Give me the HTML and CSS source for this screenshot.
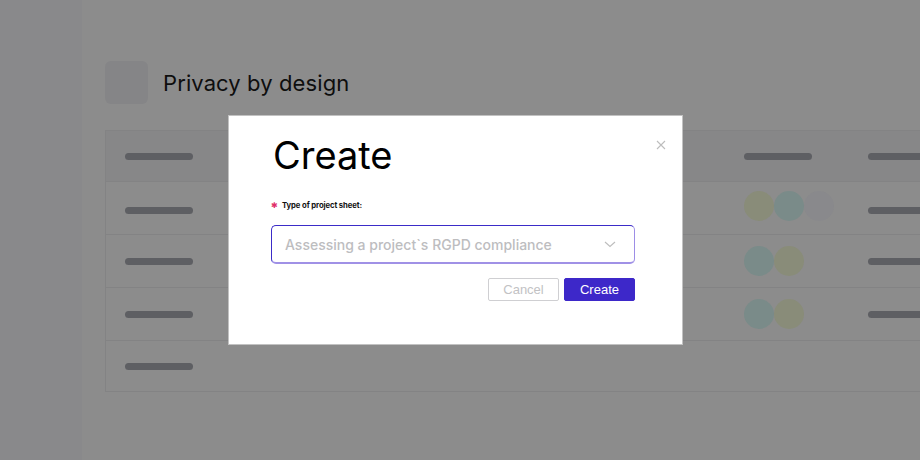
FILE: index.html
```html
<!DOCTYPE html>
<html lang="en">
<head>
<meta charset="utf-8">
<title>Privacy by design</title>
<link rel="stylesheet" href="styles.css">
</head>
<body>
<div class="app">
  <aside class="sidebar"></aside>
  <main class="main">
    <div class="page-head">
      <div class="page-icon"></div>
      <h1 class="page-title">Privacy by design</h1>
    </div>
    <div class="table">
      <div class="row head">
        <div class="cell"><span class="bar"></span></div>
        <div class="cell"><span class="bar"></span></div>
        <div class="cell"><span class="bar"></span></div>
      </div>
      <div class="row first">
        <div class="cell"><span class="bar"></span></div>
        <div class="cell avatars"><span class="dot yellow"></span><span class="dot teal"></span><span class="dot grey"></span></div>
        <div class="cell"><span class="bar"></span></div>
      </div>
      <div class="row">
        <div class="cell"><span class="bar"></span></div>
        <div class="cell avatars"><span class="dot teal"></span><span class="dot yellow"></span></div>
        <div class="cell"><span class="bar"></span></div>
      </div>
      <div class="row">
        <div class="cell"><span class="bar"></span></div>
        <div class="cell avatars"><span class="dot teal"></span><span class="dot yellow"></span></div>
        <div class="cell"><span class="bar"></span></div>
      </div>
      <div class="row last">
        <div class="cell"><span class="bar"></span></div>
        <div class="cell"></div>
        <div class="cell"></div>
      </div>
    </div>
  </main>
</div>

<div class="modal" role="dialog">
  <button class="close" aria-label="Close">
    <svg width="10" height="10" viewBox="0 0 10 10"><path d="M1 1L9 9M9 1L1 9" stroke="#bdbdbd" stroke-width="1.1" fill="none"/></svg>
  </button>
  <h2 class="modal-title">Create</h2>
  <div class="field-label"><span class="req">✱</span>Type of project sheet:</div>
  <div class="select">
    <span class="placeholder">Assessing a project`s RGPD compliance</span>
    <svg class="chev" width="12" height="7" viewBox="0 0 12 7"><path d="M1 1L6 5.5L11 1" stroke="#bdbdbd" stroke-width="1.1" fill="none"/></svg>
  </div>
  <div class="actions">
    <button class="btn cancel">Cancel</button>
    <button class="btn primary">Create</button>
  </div>
</div>
</body>
</html>
```

FILE: styles.css
```css
* { box-sizing: border-box; }
html, body { margin: 0; padding: 0; }
body {
  width: 920px;
  height: 460px;
  overflow: hidden;
  background: #8c8c8c;
  font-family: Inter, "Liberation Sans", sans-serif;
  position: relative;
}
.app {
  display: flex;
  height: 460px;
  overflow: hidden;
}
.sidebar {
  width: 82px;
  flex: none;
  background: #89898b;
}
.main {
  flex: 1;
  padding: 61px 0 0 23px;
  min-width: 0;
  overflow: hidden;
}
.page-head {
  display: flex;
  align-items: center;
  gap: 15px;
  height: 43px;
}
.page-icon {
  width: 43px;
  height: 43px;
  border-radius: 6px;
  background: #858587;
}
.page-title {
  margin: 0;
  font-size: 22px;
  font-weight: 400;
  color: #0e0e0e;
  letter-spacing: 0.1px;
}
.table {
  margin-top: 26px;
  width: 900px;
  border-left: 1px solid #838384;
  border-top: 1px solid #838384;
}
.row {
  display: grid;
  grid-template-columns: 619px 124px 1fr;
  padding-left: 19px;
  height: 53px;
  border-bottom: 1px solid #838384;
  align-items: center;
}
.row.head {
  height: 51px;
  background: #878788;
}
.row.last { height: 51px; }
.cell { display: flex; align-items: center; }
.bar {
  display: block;
  width: 68px;
  height: 7px;
  border-radius: 4px;
  background: #5e5f63;
}
.row.first .bar { margin-top: 4px; }
.row.first .avatars { margin-top: -4px; }
.dot {
  width: 30px;
  height: 30px;
  border-radius: 50%;
  display: block;
}
.dot.yellow { background: #898c79; }
.dot.teal { background: #7a8b89; }
.dot.grey { background: #89898c; }

.modal {
  position: absolute;
  left: 228px;
  top: 115px;
  width: 455px;
  height: 230px;
  background: #fff;
  border: 1px solid #c2c2c2;
  padding: 20px 47px 0 42px;
}
.close {
  position: absolute;
  top: 23px;
  right: 15px;
  width: 12px;
  height: 12px;
  padding: 0;
  border: 0;
  background: none;
  display: flex;
  align-items: center;
  justify-content: center;
}
.modal-title {
  margin: 0 0 0 2px;
  font-size: 38px;
  font-weight: 400;
  line-height: 38px;
  color: #000;
}
.field-label {
  margin-top: 27px;
  display: flex;
  align-items: center;
  font-size: 7.7px;
  font-weight: 700;
  color: #111;
  line-height: 10px;
  letter-spacing: -0.1px;
}
.req {
  color: #e0306a;
  font-size: 8px;
  font-weight: 700;
  width: 11px;
  line-height: 10px;
  font-family: "DejaVu Sans", sans-serif;
}
.select {
  margin-top: 14px;
  height: 39px;
  border: 1px solid #3b2cc8;
  border-right-color: #9d8ee6;
  border-bottom: 2px solid #a091e6;
  border-radius: 5px;
  display: flex;
  align-items: center;
  justify-content: space-between;
  padding: 0 18px 0 13px;
}
.placeholder {
  font-size: 14px;
  font-weight: 500;
  color: #bdbdbf;
}
.chev { margin-top: 1px; }
.actions {
  margin-top: 14px;
  display: flex;
  justify-content: flex-end;
  gap: 5px;
}
.btn {
  width: 71px;
  height: 23px;
  font-family: "Liberation Sans", Arial, sans-serif;
  font-size: 13px;
  border-radius: 2px;
  padding: 0;
}
.cancel {
  background: #fff;
  border: 1px solid #cfcfd2;
  color: #c2c2c4;
}
.primary {
  background: #3d28c9;
  border: 1px solid #3d28c9;
  color: #fff;
}
```
